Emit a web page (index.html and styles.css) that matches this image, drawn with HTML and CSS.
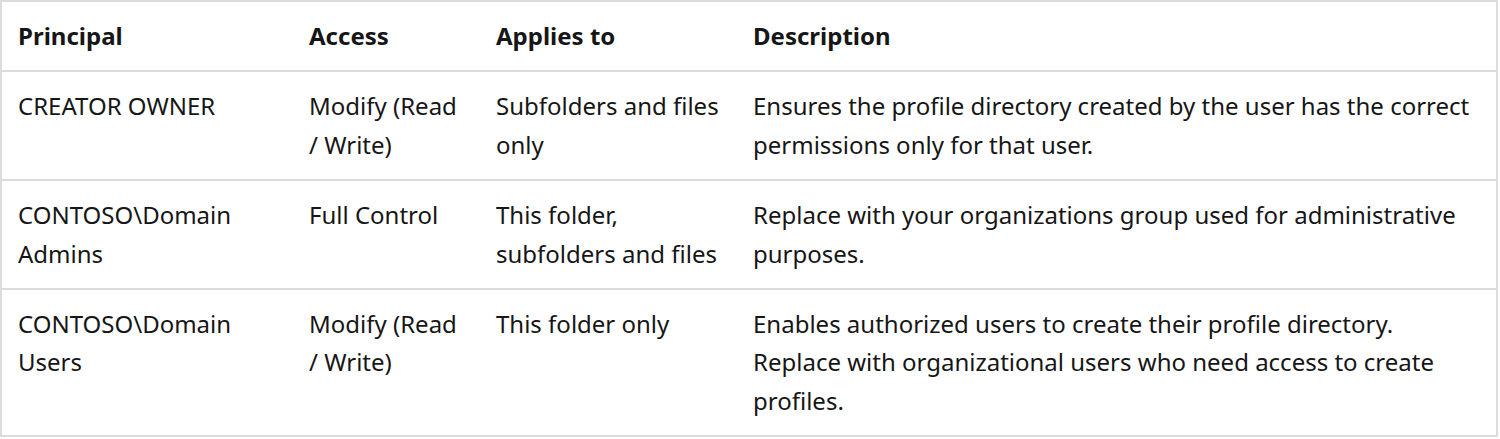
FILE: index.html
```html
<!DOCTYPE html>
<html lang="en">
<head>
<meta charset="utf-8">
<title>Permissions</title>
<link rel="stylesheet" href="styles.css">
</head>
<body>
<table class="perm-table">
  <colgroup>
    <col class="col-principal">
    <col class="col-access">
    <col class="col-applies">
    <col class="col-desc">
  </colgroup>
  <thead>
    <tr>
      <th>Principal</th>
      <th>Access</th>
      <th>Applies to</th>
      <th>Description</th>
    </tr>
  </thead>
  <tbody>
    <tr>
      <td>CREATOR OWNER</td>
      <td>Modify (Read / Write)</td>
      <td>Subfolders and files only</td>
      <td>Ensures the profile directory created by the user has the correct permissions only for that user.</td>
    </tr>
    <tr>
      <td>CONTOSO\Domain Admins</td>
      <td>Full Control</td>
      <td>This folder, subfolders and files</td>
      <td>Replace with your organizations group used for administrative purposes.</td>
    </tr>
    <tr>
      <td>CONTOSO\Domain Users</td>
      <td>Modify (Read / Write)</td>
      <td>This folder only</td>
      <td>Enables authorized users to create their profile directory. Replace with organizational users who need access to create profiles.</td>
    </tr>
  </tbody>
</table>
</body>
</html>
```
FILE: styles.css
```css
html, body {
  margin: 0;
  padding: 0;
  background: #ffffff;
}

.perm-table {
  width: 1498px;
  table-layout: fixed;
  border-collapse: collapse;
  border: 2px solid #dcdcdc;
  font-family: "Noto Sans", "Open Sans", sans-serif;
  font-size: 24px;
  line-height: 38.4px;
  color: #161616;
}

.col-principal { width: 292px; }
.col-access { width: 187px; }
.col-applies { width: 257px; }
.col-desc { width: auto; }

.perm-table th,
.perm-table td {
  text-align: left;
  vertical-align: top;
  padding: 15px 16px;
}

.perm-table th {
  font-weight: 700;
}

.perm-table tbody td {
  border-top: 2px solid #dcdcdc;
}
```
